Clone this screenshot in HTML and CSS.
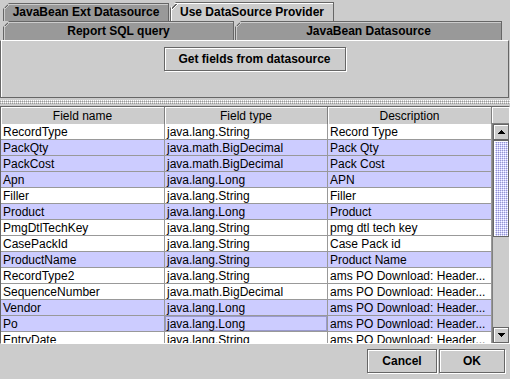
FILE: index.html
```html
<!DOCTYPE html>
<html lang="en">
<head>
  <meta charset="UTF-8">
  <title>Datasource fields</title>
  <link rel="stylesheet" href="styles.css">
</head>
<body>
<div class="dialog">
  <div class="tabs">
    <div class="tab-row top">
      <div class="tab t1">JavaBean Ext Datasource</div>
      <div class="tab t2 selected">Use DataSource Provider</div>
    </div>
    <div class="tab-row bottom">
      <div class="tab t3">Report SQL query</div>
      <div class="tab t4">JavaBean Datasource</div>
    </div>
  </div>

  <div class="panel">
    <button class="btn get">Get fields from datasource</button>
  </div>

  <div class="divider"><div class="bumps"></div></div>

  <div class="scroll">
    <div class="header">
      <div class="th">Field name</div>
      <div class="th">Field type</div>
      <div class="th">Description</div>
    </div>
    <div class="corner"></div>
    <div class="rows">
      <div class="row"><div class="cell">RecordType</div><div class="cell">java.lang.String</div><div class="cell">Record Type</div></div>
      <div class="row sel"><div class="cell">PackQty</div><div class="cell">java.math.BigDecimal</div><div class="cell">Pack Qty</div></div>
      <div class="row sel"><div class="cell">PackCost</div><div class="cell">java.math.BigDecimal</div><div class="cell">Pack Cost</div></div>
      <div class="row sel"><div class="cell">Apn</div><div class="cell">java.lang.Long</div><div class="cell">APN</div></div>
      <div class="row"><div class="cell">Filler</div><div class="cell">java.lang.String</div><div class="cell">Filler</div></div>
      <div class="row sel"><div class="cell">Product</div><div class="cell">java.lang.Long</div><div class="cell">Product</div></div>
      <div class="row"><div class="cell">PmgDtlTechKey</div><div class="cell">java.lang.String</div><div class="cell">pmg dtl tech key</div></div>
      <div class="row"><div class="cell">CasePackId</div><div class="cell">java.lang.String</div><div class="cell">Case Pack id</div></div>
      <div class="row sel"><div class="cell">ProductName</div><div class="cell">java.lang.String</div><div class="cell">Product Name</div></div>
      <div class="row"><div class="cell">RecordType2</div><div class="cell">java.lang.String</div><div class="cell">ams PO Download: Header...</div></div>
      <div class="row"><div class="cell">SequenceNumber</div><div class="cell">java.math.BigDecimal</div><div class="cell">ams PO Download: Header...</div></div>
      <div class="row sel"><div class="cell">Vendor</div><div class="cell">java.lang.Long</div><div class="cell">ams PO Download: Header...</div></div>
      <div class="row sel"><div class="cell">Po</div><div class="cell focus">java.lang.Long</div><div class="cell">ams PO Download: Header...</div></div>
      <div class="row"><div class="cell">EntryDate</div><div class="cell">java.lang.String</div><div class="cell">ams PO Download: Header...</div></div>
    </div>
    <div class="vbar">
      <div class="arrow">
        <svg width="7" height="4" shape-rendering="crispEdges"><rect x="3" y="0" width="1" height="1"/><rect x="2" y="1" width="3" height="1"/><rect x="1" y="2" width="5" height="1"/><rect x="0" y="3" width="7" height="1"/></svg>
      </div>
      <div class="track"><div class="thumb"></div></div>
      <div class="arrow">
        <svg width="7" height="4" shape-rendering="crispEdges"><rect x="0" y="0" width="7" height="1"/><rect x="1" y="1" width="5" height="1"/><rect x="2" y="2" width="3" height="1"/><rect x="3" y="3" width="1" height="1"/></svg>
      </div>
    </div>
  </div>

  <div class="footer">
    <button class="btn cancel">Cancel</button>
    <button class="btn ok">OK</button>
  </div>
</div>
</body>
</html>
```

FILE: styles.css
```css
* { box-sizing: border-box; }
body { margin: 0; background: #ccc; color: #000; font-family: "Liberation Sans", Arial, sans-serif; font-size: 12px; }
.dialog { width: 510px; height: 379px; overflow: hidden; }

/* tabs */
.tab-row { display: flex; align-items: flex-end; gap: 1px; padding-left: 3px; }
.tab-row.top { height: 21px; }
.tab-row.bottom { height: 19px; }
.tab { font-weight: bold; text-align: center; white-space: nowrap; border: 1px solid #666; border-bottom: 0; background: linear-gradient(135deg, transparent 4.2px, #666 4.2px, #666 5.2px, #ccc 5.2px, #ccc 6.2px, #999 6.2px); background-origin: border-box; box-shadow: inset 1px 1px #ccc; clip-path: polygon(6px 0, 100% 0, 100% 100%, 0 100%, 0 6px); }
.top .tab { height: 18px; line-height: 17px; }
.bottom .tab { height: 19px; line-height: 19px; }
.tab.selected { height: 19px; line-height: 18px; background: linear-gradient(135deg, transparent 4.2px, #666 4.2px, #666 5.2px, #fff 5.2px, #fff 6.2px, #ccc 6.2px); box-shadow: inset 1px 1px #fff; }
.t1 { width: 166px; }
.t2 { width: 164px; }
.t3 { width: 231px; }
.t4 { width: 267px; }

.panel { width: 509px; height: 58px; border: 1px solid #666; border-top-color: #fff; box-shadow: inset 1px 0 #fff; padding-top: 6px; display: flex; justify-content: center; align-items: flex-start; }

.btn { font: bold 12px "Liberation Sans", Arial, sans-serif; color: #000; background: #ccc; border: 1px solid #666; box-shadow: inset 1px 1px #fff, 1px 1px #fff; height: 24px; padding: 0; }
.get { width: 182px; }

.divider { height: 8px; padding-top: 2px; }
.bumps { height: 4px; background: conic-gradient(#fff 25%, #ccc 0 50%, #999 0 75%, #ccc 0); background-size: 2px 2px; }

/* table */
.scroll { height: 238px; border: 1px solid #666; border-right-color: #fff; border-bottom-color: #fff; display: grid; grid-template-columns: 491px 17px; grid-template-rows: 17px 219px; background: #ccc; }
.header { display: grid; grid-template-columns: 164px 163px 164px; }
.th { text-align: center; line-height: 16px; padding-top: 1px; border-right: 1px solid #808080; border-bottom: 1px solid #808080; box-shadow: inset 1px 1px #fff; }
.corner { border-bottom: 1px solid #808080; box-shadow: inset 1px 1px #fff; }
.rows { overflow: hidden; background: #fff; }
.row { display: grid; grid-template-columns: 164px 163px 164px; height: 16px; background: #fff; }
.row.sel { background: #ccf; }
.cell { border-right: 1px solid #999; border-bottom: 1px solid #999; padding: 1px 0 0 2px; line-height: 15px; white-space: nowrap; overflow: hidden; }
.cell.focus { box-shadow: inset 0 0 0 1px #99c; }

.vbar { display: flex; flex-direction: column; border-left: 1px solid #808080; }
.arrow { height: 16px; flex: none; border: 1px solid #666; box-shadow: inset 1px 1px #fff; display: flex; align-items: center; justify-content: center; background: #ccc; }
.track { flex: 1; }
.thumb { height: 97px; border: 1px solid #666; box-shadow: inset 1px 1px #fff; background: conic-gradient(#fff 25%, #ccf 0 50%, #99c 0 75%, #ccf 0); background-size: 2px 2px; }

.footer { height: 35px; display: flex; justify-content: flex-end; align-items: flex-start; gap: 2px; padding: 5px 5px 0 0; }
.cancel { width: 70px; }
.ok { width: 66px; }
```
